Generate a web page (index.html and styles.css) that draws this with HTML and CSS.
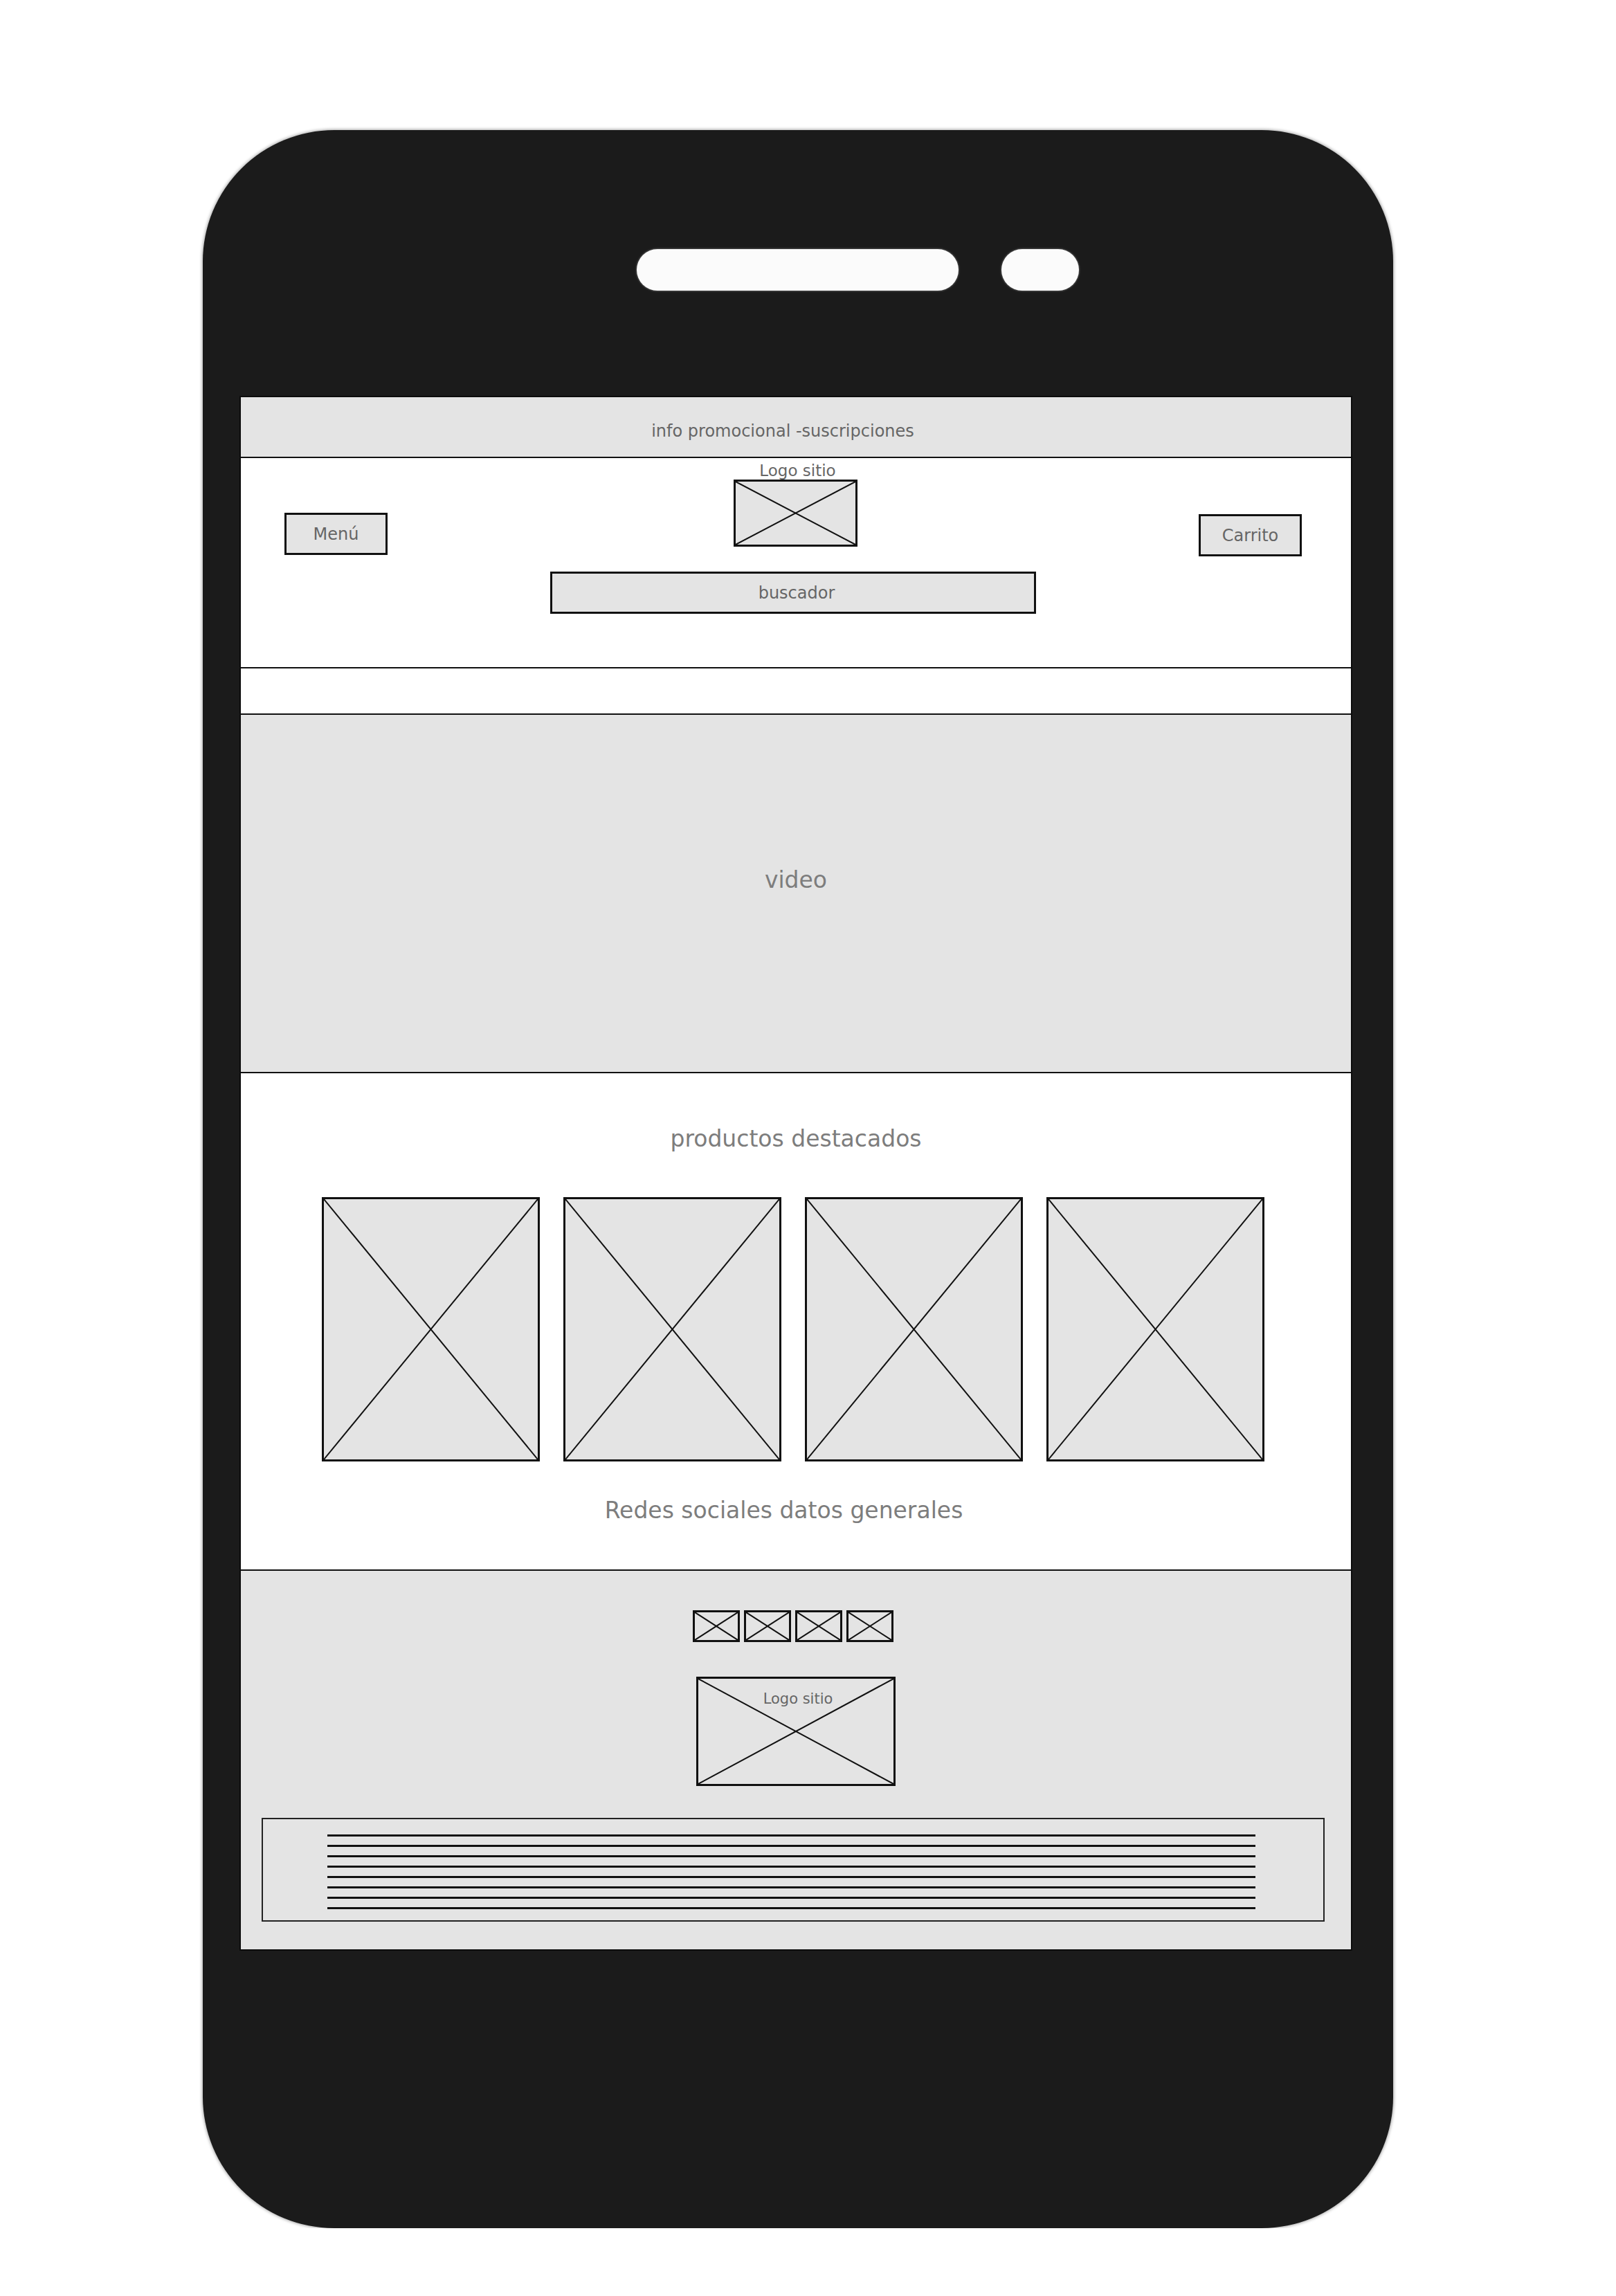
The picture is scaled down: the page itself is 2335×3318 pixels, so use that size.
FILE: index.html
```html
<!DOCTYPE html>
<html lang="es">
<head>
    <meta charset="UTF-8" />
    <meta name="viewport" content="width=device-width, initial-scale=1" />
    <title>Wireframe móvil - tienda</title>
    <link rel="stylesheet" href="styles.css">
</head>
<body>

<div class="phone">
    <div class="phone-top">
        <span class="speaker"></span>
        <span class="camera"></span>
    </div>

    <div class="screen">
        <div class="promo">info promocional -suscripciones</div>

        <header class="site-header">
            <div class="header-row">
                <div class="btn btn-menu">Menú</div>
                <div class="logo">
                    <span class="logo-label">Logo sitio</span>
                    <div class="ph logo-box">
                        <svg viewBox="0 0 100 100" preserveAspectRatio="none"><line x1="0" y1="0" x2="100" y2="100"/><line x1="100" y1="0" x2="0" y2="100"/></svg>
                    </div>
                </div>
                <div class="btn btn-cart">Carrito</div>
            </div>
            <div class="search">buscador</div>
        </header>

        <div class="strip"></div>

        <section class="video">video</section>

        <section class="products">
            <h2>productos destacados</h2>
            <div class="product-row">
                <div class="ph product">
                    <svg viewBox="0 0 100 100" preserveAspectRatio="none"><line x1="0" y1="0" x2="100" y2="100"/><line x1="100" y1="0" x2="0" y2="100"/></svg>
                </div>
                <div class="ph product">
                    <svg viewBox="0 0 100 100" preserveAspectRatio="none"><line x1="0" y1="0" x2="100" y2="100"/><line x1="100" y1="0" x2="0" y2="100"/></svg>
                </div>
                <div class="ph product">
                    <svg viewBox="0 0 100 100" preserveAspectRatio="none"><line x1="0" y1="0" x2="100" y2="100"/><line x1="100" y1="0" x2="0" y2="100"/></svg>
                </div>
                <div class="ph product">
                    <svg viewBox="0 0 100 100" preserveAspectRatio="none"><line x1="0" y1="0" x2="100" y2="100"/><line x1="100" y1="0" x2="0" y2="100"/></svg>
                </div>
            </div>
            <p class="social-title">Redes sociales datos generales</p>
        </section>

        <footer class="footer">
            <div class="social-row">
                <div class="ph social">
                    <svg viewBox="0 0 100 100" preserveAspectRatio="none"><line x1="0" y1="0" x2="100" y2="100"/><line x1="100" y1="0" x2="0" y2="100"/></svg>
                </div>
                <div class="ph social">
                    <svg viewBox="0 0 100 100" preserveAspectRatio="none"><line x1="0" y1="0" x2="100" y2="100"/><line x1="100" y1="0" x2="0" y2="100"/></svg>
                </div>
                <div class="ph social">
                    <svg viewBox="0 0 100 100" preserveAspectRatio="none"><line x1="0" y1="0" x2="100" y2="100"/><line x1="100" y1="0" x2="0" y2="100"/></svg>
                </div>
                <div class="ph social">
                    <svg viewBox="0 0 100 100" preserveAspectRatio="none"><line x1="0" y1="0" x2="100" y2="100"/><line x1="100" y1="0" x2="0" y2="100"/></svg>
                </div>
            </div>

            <div class="ph footer-logo">
                <svg viewBox="0 0 100 100" preserveAspectRatio="none"><line x1="0" y1="0" x2="100" y2="100"/><line x1="100" y1="0" x2="0" y2="100"/></svg>
                <span class="footer-logo-label">Logo sitio</span>
            </div>

            <div class="info-box">
                <div class="info-line"></div>
                <div class="info-line"></div>
                <div class="info-line"></div>
                <div class="info-line"></div>
                <div class="info-line"></div>
                <div class="info-line"></div>
                <div class="info-line"></div>
                <div class="info-line"></div>
            </div>
        </footer>
    </div>
</div>

</body>
</html>
```

FILE: styles.css
```css
* {
    box-sizing: border-box;
}
body {
    margin: 0;
    background-color: #fff;
    font-family: "DejaVu Sans", "Open Sans", sans-serif;
    color: #666;
}

/* phone frame */
.phone {
    width: 1720px;
    height: 3032px;
    margin: 188px 0 0 293px;
    background-color: #1b1b1b;
    border-radius: 190px;
    box-shadow: 0 0 4px 1px rgba(0, 0, 0, 0.35);
}
.phone-top {
    height: 384px;
    padding: 172px 0 0 627px;
    display: flex;
    gap: 62px;
}
.speaker, .camera {
    display: block;
    height: 60px;
    border-radius: 30px;
    background-color: #fbfbfb;
    box-shadow: 0 0 3px rgba(255, 255, 255, 0.5);
}
.speaker {
    width: 465px;
}
.camera {
    width: 112px;
}

.screen {
    width: 1608px;
    margin-left: 53px;
    border: 2px solid #0c0c0c;
    background-color: #fff;
}

/* placeholder box with a cross */
.ph {
    position: relative;
    background-color: #e4e4e4;
    border: 3px solid #111;
}
.ph svg {
    position: absolute;
    top: 0;
    left: 0;
    width: 100%;
    height: 100%;
}
.ph line {
    stroke: #111;
    stroke-width: 2;
    vector-effect: non-scaling-stroke;
}

/* promo bar */
.promo {
    height: 88px;
    padding: 35px 38px 0 0;
    background-color: #e4e4e4;
    border-bottom: 2px solid #111;
    text-align: center;
    font-size: 24px;
    line-height: 28px;
}

/* header */
.site-header {
    height: 304px;
    padding: 6px 71px 0 63px;
    border-bottom: 2px solid #111;
    display: flex;
    flex-direction: column;
}
.header-row {
    display: flex;
    justify-content: space-between;
    align-items: flex-start;
}
.btn {
    width: 149px;
    height: 61px;
    border: 3px solid #111;
    background-color: #e4e4e4;
    display: flex;
    align-items: center;
    justify-content: center;
    font-size: 24px;
    line-height: 28px;
}
.btn-menu {
    margin-top: 73px;
}
.btn-cart {
    margin-top: 75px;
}
.logo {
    display: flex;
    flex-direction: column;
    align-items: center;
    margin-left: 7px;
}
.logo-label {
    font-size: 23px;
    line-height: 25px;
    padding-left: 6px;
}
.logo-box {
    width: 179px;
    height: 97px;
}
.search {
    width: 702px;
    height: 61px;
    margin: 22px auto 0;
    padding-left: 10px;
    border: 3px solid #111;
    background-color: #e4e4e4;
    display: flex;
    align-items: center;
    justify-content: center;
    font-size: 24px;
    line-height: 28px;
}

.strip {
    height: 67px;
    border-bottom: 2px solid #111;
}

/* video */
.video {
    height: 518px;
    padding-top: 220px;
    background-color: #e4e4e4;
    border-bottom: 2px solid #111;
    text-align: center;
    font-size: 33px;
    line-height: 38px;
    color: #7d7d7d;
}

/* products */
.products {
    height: 719px;
    padding-top: 76px;
    border-bottom: 2px solid #111;
    text-align: center;
}
.products h2 {
    margin: 0;
    font-size: 33px;
    line-height: 38px;
    font-weight: normal;
    color: #7d7d7d;
}
.product-row {
    display: flex;
    justify-content: center;
    gap: 34px;
    margin-top: 65px;
    padding-right: 8px;
}
.product {
    width: 315px;
    height: 382px;
}
.social-title {
    margin: 52px 0 0;
    padding-right: 35px;
    font-size: 33px;
    line-height: 38px;
    color: #7d7d7d;
}

/* footer */
.footer {
    height: 547px;
    padding-top: 57px;
    background-color: #e4e4e4;
    display: flex;
    flex-direction: column;
    align-items: center;
}
.social-row {
    display: flex;
    gap: 6px;
    padding-right: 8px;
}
.social {
    width: 68px;
    height: 46px;
}
.footer-logo {
    width: 288px;
    height: 158px;
    margin-top: 50px;
    padding-top: 17px;
    text-align: center;
}
.footer-logo-label {
    position: relative;
    font-size: 21px;
    line-height: 24px;
    padding-left: 6px;
}
.info-box {
    align-self: stretch;
    height: 150px;
    margin: 46px 38px 0 30px;
    padding: 22px 98px 0 93px;
    border: 2px solid #222;
}
.info-line {
    height: 3px;
    margin-bottom: 12px;
    background-color: #111;
}
```
